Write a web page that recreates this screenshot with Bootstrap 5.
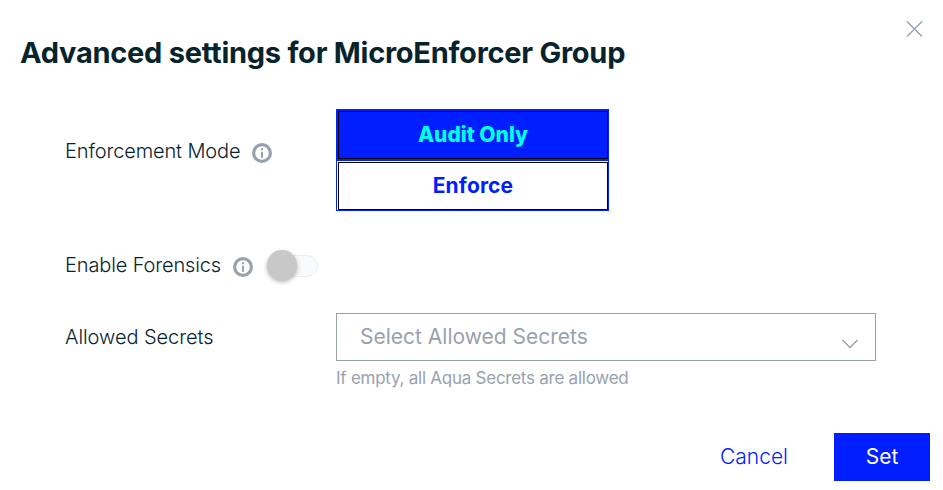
<!DOCTYPE html>
<html lang="en">
<head>
<meta charset="utf-8">
<meta name="viewport" content="width=device-width, initial-scale=1">
<title>Advanced settings</title>
<link href="https://cdn.jsdelivr.net/npm/bootstrap@5.3.0/dist/css/bootstrap.min.css" rel="stylesheet">
<style>
body{font-family:Inter,"Liberation Sans",sans-serif;color:#07242d;background:#fff;overflow:hidden}
.dialog{width:943px;height:490px;padding:17px 13px 9px 20px}
.dialog-title{font-size:29px;line-height:36px;font-weight:700;margin-top:18px;color:#07242d;letter-spacing:-.26px}
.close-x{width:24px;height:24px;margin-right:4px}
.settings{padding:38px 54px 0 45px}
.name{width:271px;font-size:20px;line-height:30px;font-weight:300;letter-spacing:-.13px}
.mode-name{padding-bottom:18px}
.info{width:20px;height:20px;margin-left:12px;margin-top:4px}
.modes{width:273px;border:1px solid #001eff}
.mode{font-size:21px;font-weight:700;line-height:46px;border:1px solid #000;border-radius:0;padding:0;width:100%;display:block;background:transparent}
.mode-on{background:#001eff;padding:1px 0 2px 1px}
.mode-on .mode{color:#00ffe4;font-weight:800}
.mode-off{padding:1px 0 0 1px}
.mode-off .mode{color:#001eff;letter-spacing:.15px}
.forensics{margin-top:39px}
.toggle{width:51px;height:22px;border:1px solid #ebedf0;background:#f9fafc;border-radius:11px;margin-left:14px;margin-top:1px}
.knob{width:30px;height:30px;flex:none;border-radius:50%;background:#c8c8c8;box-shadow:0 2px 4px rgba(0,0,0,.3);margin:-1px 0 0 -1px}
.secrets{margin-top:33px}
.secrets .name{padding-top:9px;letter-spacing:-.07px}
.picker{height:48px;border:1px solid #98a2ae;border-radius:0;padding:0 16px 0 23px;font-size:21px;color:#98a2ae}
.picker svg{margin-top:14px}
.hint{font-size:17px;line-height:24px;color:#98a2ae;margin-top:5px;letter-spacing:-.25px}
.actions .btn{font-size:21px;height:48px;border-radius:0;border:0;padding:0}
.actions .cancel{color:#001eff;font-weight:300;margin-right:46px}
.set,.set:hover{width:96px;background:#001eff;color:#fff}
</style>
</head>
<body>
<main class="dialog d-flex flex-column">
  <header class="d-flex justify-content-between align-items-start">
    <h1 class="dialog-title mb-0">Advanced settings for MicroEnforcer Group</h1>
    <button class="btn p-0 border-0 d-flex close-x" aria-label="Close"><svg width="24" height="24" fill="none" stroke="#98a2ae" stroke-width="1.4"><path d="M5 4.5l15 15M20 4.5l-15 15"/></svg></button>
  </header>
  <section class="settings">
    <div class="d-flex">
      <div class="name mode-name d-flex align-items-center"><span>Enforcement Mode</span>
        <svg class="info" viewBox="0 0 20 20"><circle cx="10" cy="10" r="8.4" fill="none" stroke="#98a2ae" stroke-width="3.2"/><path d="M9 8.7h2V14.8H9zM9 5.2h2v2H9z" fill="#98a2ae"/></svg></div>
      <div class="modes">
        <div class="mode-on"><button class="mode">Audit Only</button></div>
        <div class="mode-off"><button class="mode">Enforce</button></div>
      </div>
    </div>
    <div class="forensics d-flex align-items-center">
      <span class="name w-auto">Enable Forensics</span>
      <svg class="info" viewBox="0 0 20 20"><circle cx="10" cy="10" r="8.4" fill="none" stroke="#98a2ae" stroke-width="3.2"/><path d="M9 8.7h2V14.8H9zM9 5.2h2v2H9z" fill="#98a2ae"/></svg>
      <div class="toggle d-flex align-items-center" role="switch" aria-checked="false"><span class="knob"></span></div>
    </div>
    <div class="secrets d-flex">
      <label class="name flex-shrink-0">Allowed Secrets</label>
      <div class="flex-grow-1">
        <div class="picker d-flex align-items-center justify-content-between"><span>Select Allowed Secrets</span>
          <svg width="18" height="12" fill="none" stroke="#98a2ae" stroke-width="1.5"><path d="M1.5 2l7.5 7.5 7.5-7.5"/></svg></div>
        <div class="hint">If empty, all Aqua Secrets are allowed</div>
      </div>
    </div>
  </section>
  <footer class="actions d-flex justify-content-end mt-auto">
    <button class="btn cancel">Cancel</button>
    <button class="btn set">Set</button>
  </footer>
</main>
<script src="https://cdn.jsdelivr.net/npm/bootstrap@5.3.0/dist/js/bootstrap.bundle.min.js"></script>
</body>
</html>
